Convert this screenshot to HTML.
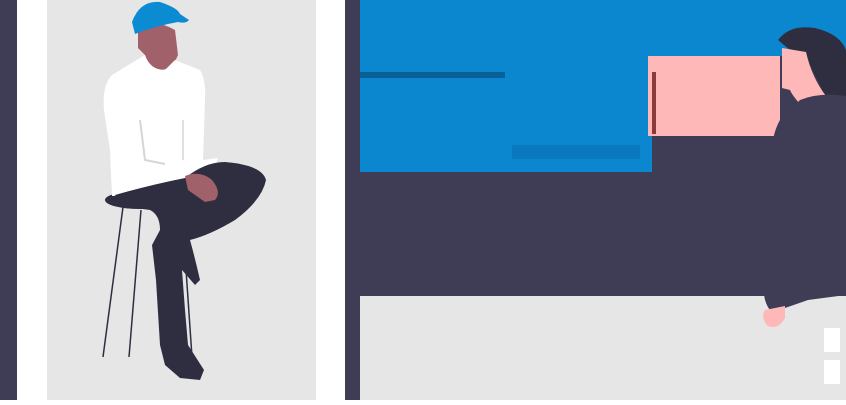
<!DOCTYPE html>
<html><head><style>html,body{margin:0;padding:0;overflow:hidden;background:#fff}</style></head>
<body>
<svg width="846" height="400" viewBox="0 0 846 400" xmlns="http://www.w3.org/2000/svg">
<rect width="846" height="400" fill="#fff"/>
<rect x="0" y="0" width="17" height="400" fill="#3f3d56"/>
<rect x="47" y="0" width="269" height="400" fill="#e6e6e6"/>
<rect x="345" y="0" width="15" height="400" fill="#3f3d56"/>
<rect x="360" y="0" width="486" height="296" fill="#3f3d56"/>
<rect x="360" y="296" width="486" height="104" fill="#e6e6e6"/>
<rect x="360" y="0" width="486" height="56" fill="#0a87cf"/>
<rect x="360" y="0" width="292" height="172" fill="#0a87cf"/>
<rect x="360" y="72" width="145" height="6" fill="#0a5f96"/>
<rect x="512" y="145" width="128" height="14" fill="#0a78bd"/>
<rect x="648" y="56" width="132" height="80" fill="#ffb8b8"/>
<rect x="652" y="72" width="4" height="62" fill="#8a3a3a"/>
<!-- right person -->
<path d="M778 40 Q790 24 815 28 Q840 34 846 50 L846 100 L825 96 Q818 80 808 62 L790 50 Z" fill="#2f2e41"/>
<path d="M782 48 L806 52 Q812 78 826 96 L800 104 Q792 95 790 90 L782 88 Z" fill="#ffb8b8"/>
<path d="M800 100 Q820 92 846 96 L846 295 L808 300 L785 308 L770 310 Q762 300 764 280 L768 200 Q768 140 780 120 Z" fill="#3f3d56"/>
<path d="M765 310 L785 306 L785 318 Q778 330 768 326 Q760 318 765 310 Z" fill="#ffb8b8"/>
<rect x="824" y="328" width="16" height="24" fill="#fff"/>
<rect x="824" y="360" width="16" height="24" fill="#fff"/>
<!-- left person -->
<line x1="123" y1="207" x2="103" y2="357" stroke="#2f2e41" stroke-width="1.5"/>
<line x1="141" y1="210" x2="129" y2="357" stroke="#2f2e41" stroke-width="1.5"/>
<line x1="185" y1="255" x2="192" y2="357" stroke="#2f2e41" stroke-width="1.5"/>
<ellipse cx="140" cy="200" rx="35" ry="9" fill="#2f2e41"/>
<path d="M138 28 Q155 18 175 30 L178 55 Q172 70 160 70 Q148 68 145 55 L138 48 Z" fill="#a0616a"/>
<path d="M132 22 Q140 0 160 2 Q178 8 180 14 L189 20 Q186 24 178 22 L168 24 Q150 28 135 34 Z" fill="#0b8bd1"/>
<path d="M145 55 Q150 70 165 70 L175 60 L200 70 Q206 80 205 100 L203 160 L218 158 L210 180 L195 190 L170 190 L145 195 L112 196 L110 150 L104 110 Q102 85 112 75 Z" fill="#fff"/>
<path d="M140 120 L145 160 L165 164" stroke="#d6d6d6" stroke-width="2" fill="none"/>
<path d="M183 120 L183 160" stroke="#d6d6d6" stroke-width="1.5"/>
<path d="M115 195 Q150 185 185 178 Q205 162 225 162 Q262 165 266 180 Q262 200 235 220 Q210 235 190 240 Q195 258 200 280 L195 285 L182 270 L185 310 L188 345 L204 370 L200 380 L180 378 L165 365 L160 345 L156 280 L152 245 L160 230 Q160 215 150 210 L120 206 Z" fill="#2f2e41"/>
<path d="M185 176 Q200 170 212 180 Q222 192 215 200 L205 202 L188 190 Z" fill="#a0616a"/>
</svg>
</body></html>
